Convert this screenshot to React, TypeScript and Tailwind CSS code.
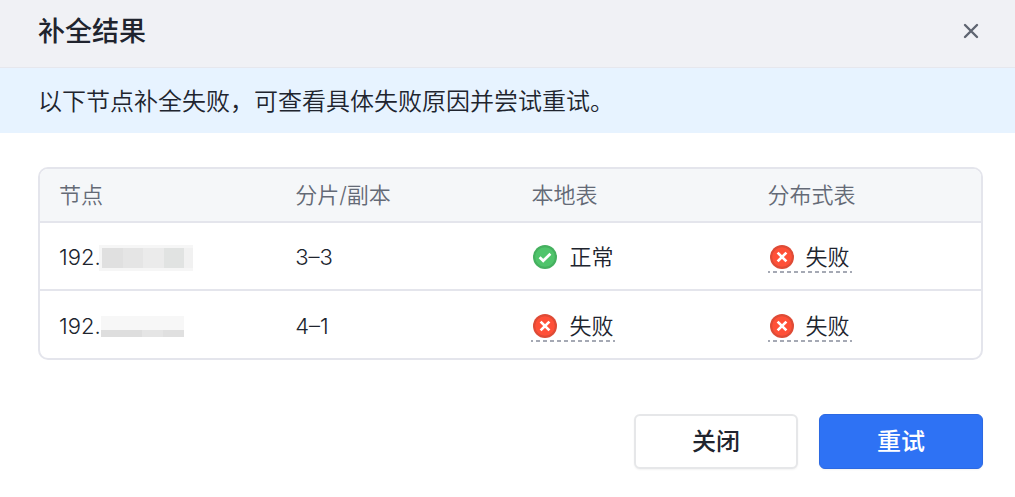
import { useState } from "react";

type Status = "success" | "failed";

interface NodeResult {
  id: string;
  ipPrefix: string;
  replica: string;
  local: Status;
  distributed: Status;
}

const results: NodeResult[] = [
  {
    id: "node-1",
    ipPrefix: "192.",
    replica: "3–3",
    local: "success",
    distributed: "failed",
  },
  {
    id: "node-2",
    ipPrefix: "192.",
    replica: "4–1",
    local: "failed",
    distributed: "failed",
  },
];

const columns = ["节点", "分片/副本", "本地表", "分布式表"];

function StatusIcon({ status }: { status: Status }) {
  const ok = status === "success";
  return (
    <svg className="h-6 w-6 shrink-0" viewBox="0 0 24 24" fill="none" aria-hidden="true">
      <circle cx="12" cy="12" r="12" fill={ok ? "#45b05f" : "#de4b36"} />
      <circle cx="12" cy="12" r="9.8" fill={ok ? "#4fc46b" : "#ff5038"} />
      <path
        d={ok ? "M6.6 12.2l3.6 3.6 7.2-7" : "M7.6 7.6l8.8 8.8M16.4 7.6l-8.8 8.8"}
        stroke="#fff"
        strokeWidth="2.7"
        strokeLinecap="butt"
      />
    </svg>
  );
}

function StatusCell({ status }: { status: Status }) {
  if (status === "success") {
    return (
      <span className="inline-flex items-center gap-3 px-0.5 align-middle">
        <StatusIcon status={status} />
        正常
      </span>
    );
  }

  return (
    <span className="relative inline-flex items-center gap-3 px-0.5 align-middle">
      <StatusIcon status={status} />
      失败
      <svg className="absolute bottom-0 left-0 h-0.5 w-full" aria-hidden="true">
        <line x1="0" y1="1" x2="100%" y2="1" stroke="#888d9c" strokeWidth="1.4" strokeDasharray="4 3" strokeDashoffset="2" />
      </svg>
    </span>
  );
}

// Hidden part of the address
function MaskedAddress({ id }: { id: string }) {
  if (id === "node-1") {
    return (
      <svg className="-ml-0.5 h-7 w-24 shrink-0" viewBox="0 0 96 28" shapeRendering="crispEdges" aria-hidden="true">
        <rect x="0" y="2" width="94" height="26" fill="#f6f6f6" />
        <rect x="3" y="5" width="21" height="20" fill="#e0e0e0" />
        <rect x="24" y="5" width="20" height="20" fill="#e5e5e5" />
        <rect x="44" y="5" width="21" height="20" fill="#ebebeb" />
        <rect x="65" y="5" width="20" height="20" fill="#e1e3e2" />
        <rect x="85" y="5" width="9" height="20" fill="#f1f1f1" />
      </svg>
    );
  }
  return (
    <svg className="-ml-0.5 h-7 w-24 shrink-0" viewBox="0 0 96 28" shapeRendering="crispEdges" aria-hidden="true">
      <rect x="2" y="4" width="83" height="14" fill="#f7f7f7" />
      <rect x="2" y="18" width="41" height="7" fill="#dedede" />
      <rect x="43" y="18" width="21" height="7" fill="#e5e5e5" />
      <rect x="64" y="18" width="21" height="7" fill="#e0e0e0" />
    </svg>
  );
}

export default function App() {
  const [open, setOpen] = useState(true);

  if (!open) return null;

  return (
    <div
      role="dialog"
      aria-labelledby="dialog-title"
      className="w-full bg-white font-['Inter','Noto_Sans_CJK_SC',sans-serif] text-[#20242e]"
    >
      <header className="flex h-17 items-center justify-between border-b border-[#e6e7ed] bg-[#f0f1f5] pr-8 pl-[38px]">
        <h1 id="dialog-title" className="pb-1 text-[27px] leading-9 font-medium">
          补全结果
        </h1>
        <button
          type="button"
          aria-label="关闭"
          onClick={() => setOpen(false)}
          className="flex h-6 w-6 items-center justify-center text-[#5f6571]"
        >
          <svg className="-mt-1.5 h-4 w-4" viewBox="0 0 16 16" fill="none" aria-hidden="true">
            <path d="M2 2l12 12M14 2L2 14" stroke="currentColor" strokeWidth="2.4" strokeLinecap="round" />
          </svg>
        </button>
      </header>

      <p className="bg-[#e7f3ff] pt-[17px] pr-8 pb-[15px] pl-[38px] text-2xl leading-[33px] font-[350]">
        以下节点补全失败，可查看具体失败原因并尝试重试。
      </p>

      <div className="pt-[34px] pr-8 pl-[38px]">
        <div className="overflow-hidden rounded-[10px] border-2 border-[#e4e5ec]">
          <table className="w-full table-fixed text-left text-[22px] leading-8">
            <thead className="bg-[#f5f7f9] text-[#646a76]">
              <tr className="h-[53px] border-b-2 border-[#e4e5ec]">
                {columns.map((column) => (
                  <th key={column} scope="col" className="w-[25.1%] px-[19px] font-[350] last:w-auto">
                    {column}
                  </th>
                ))}
              </tr>
            </thead>
            <tbody>
              {results.map((row) => (
                <tr key={row.id} className="h-[68px] border-b-2 border-[#e4e5ec] font-[350] last:border-b-0">
                  <td className="px-[19px] pt-0.5">
                    <span className="flex items-center">
                      {row.ipPrefix}
                      <MaskedAddress id={row.id} />
                    </span>
                  </td>
                  <td className="px-[19px] pt-0.5">{row.replica}</td>
                  <td className="px-[19px]">
                    <StatusCell status={row.local} />
                  </td>
                  <td className="px-[19px]">
                    <StatusCell status={row.distributed} />
                  </td>
                </tr>
              ))}
            </tbody>
          </table>
        </div>
      </div>

      <footer className="flex justify-end gap-[21px] pt-[54px] pr-8 pb-7 pl-[38px] text-2xl font-medium">
        <button
          type="button"
          onClick={() => setOpen(false)}
          className="h-[55px] w-[164px] rounded-md border-2 border-[#e6e7e9] bg-white shadow-xs"
        >
          关闭
        </button>
        <button
          type="button"
          className="h-[55px] w-[164px] rounded-md border border-[#2c69e2] bg-[#2e72f4] text-white shadow-xs"
        >
          重试
        </button>
      </footer>
    </div>
  );
}
